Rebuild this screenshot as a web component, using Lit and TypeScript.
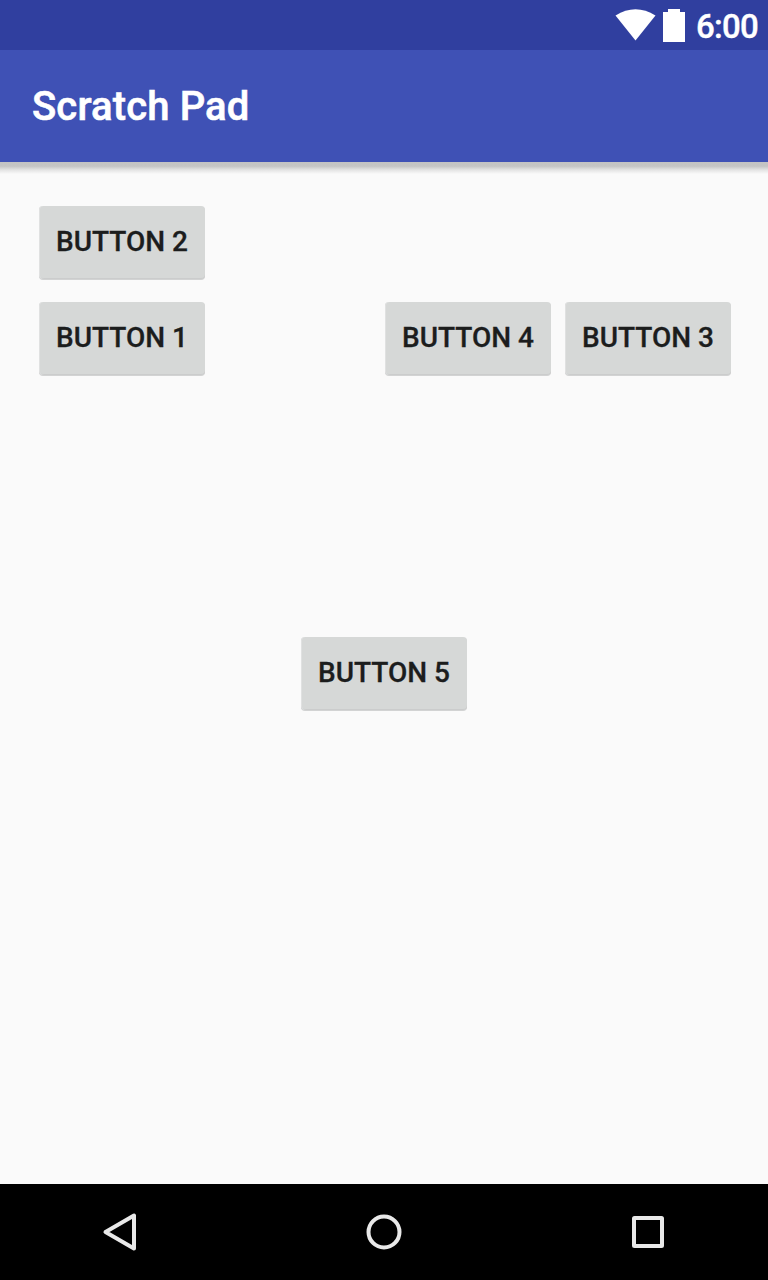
import { LitElement, html, css } from "lit";
import { customElement, property } from "lit/decorators.js";

@customElement("pad-button")
class PadButton extends LitElement {
  @property() label = "";
  static styles = css`
    :host { display: block; }
    button {
      display: block; box-sizing: border-box; width: 166px; height: 73px; margin: 0; padding: 0 0 1px;
      border: 0; border-radius: 4px; background: #d6d8d7; color: #1c1d1d;
      box-shadow: inset 1px 0 #e0e1e1, inset 0 -1px #cbcccc, 0 1px #d2d3d3;
      font: 500 28px/36px Roboto, sans-serif; white-space: nowrap; -webkit-text-stroke: 0.3px #1c1d1d;
    }
  `;
  render() { return html`<button>${this.label}</button>`; }
}

@customElement("app-root")
class AppRoot extends LitElement {
  static styles = css`
    :host { display: flex; flex-direction: column; width: 768px; height: 1280px; overflow: hidden; background: #fafafa; font-family: Roboto, sans-serif; }
    .status { height: 50px; flex: none; background: #303f9f; display: flex; justify-content: flex-end; }
    .status svg { display: block; }
    .time { color: #fff; font-size: 33px; line-height: 54px; font-weight: 500; width: 72px; letter-spacing: -0.7px; -webkit-text-stroke: 0.4px #fff; }
    .bar { height: 112px; flex: none; background: #3f51b5; color: #fff; font-size: 40px; font-weight: 500; line-height: 114px; padding-left: 32px; box-sizing: border-box; letter-spacing: 0.15px; -webkit-text-stroke: 0.6px #fff; }
    .shade { height: 12px; flex: none; background: linear-gradient(#c3c3c3, #c5c5c5 35%, #e3e3e3 65%, #fafafa); }
    .content { flex: 1; padding: 32px 37px 0 39px; display: flex; flex-direction: column; }
    .row { display: flex; justify-content: space-between; margin-top: 23px; }
    .pair { display: flex; gap: 14px; }
    .center { display: flex; justify-content: center; margin-top: 262px; padding-right: 2px; }
    .nav { height: 96px; flex: none; background: #000; }
    .nav svg { display: block; }
  `;
  render() {
    return html`
      <div class="status">
        <svg width="84" height="50" viewBox="612 0 84 50" fill="#fff"><path d="M615.5 15.5Q635.5 3 655.5 15.5L635.5 40.500Z"/><path d="M663 12h5V9h12v3h5v30h-22z"/></svg>
        <div class="time">6:00</div>
      </div>
      <div class="bar">Scratch Pad</div>
      <div class="shade"></div>
      <div class="content">
        <pad-button label="BUTTON 2"></pad-button>
        <div class="row">
          <pad-button label="BUTTON 1"></pad-button>
          <div class="pair"><pad-button label="BUTTON 4"></pad-button><pad-button label="BUTTON 3"></pad-button></div>
        </div>
        <div class="center"><pad-button label="BUTTON 5"></pad-button></div>
      </div>
      <div class="nav">
        <svg width="768" height="96" viewBox="0 1184 768 96" fill="none" stroke="#e9e9e9" stroke-width="4" stroke-linejoin="round">
          <path d="M134 1215.500V1248.500L105.500 1232Z"/><circle cx="384" cy="1232" r="15.500"/><rect x="634" y="1218" width="28" height="28" rx="0.500"/>
        </svg>
      </div>`;
  }
}
